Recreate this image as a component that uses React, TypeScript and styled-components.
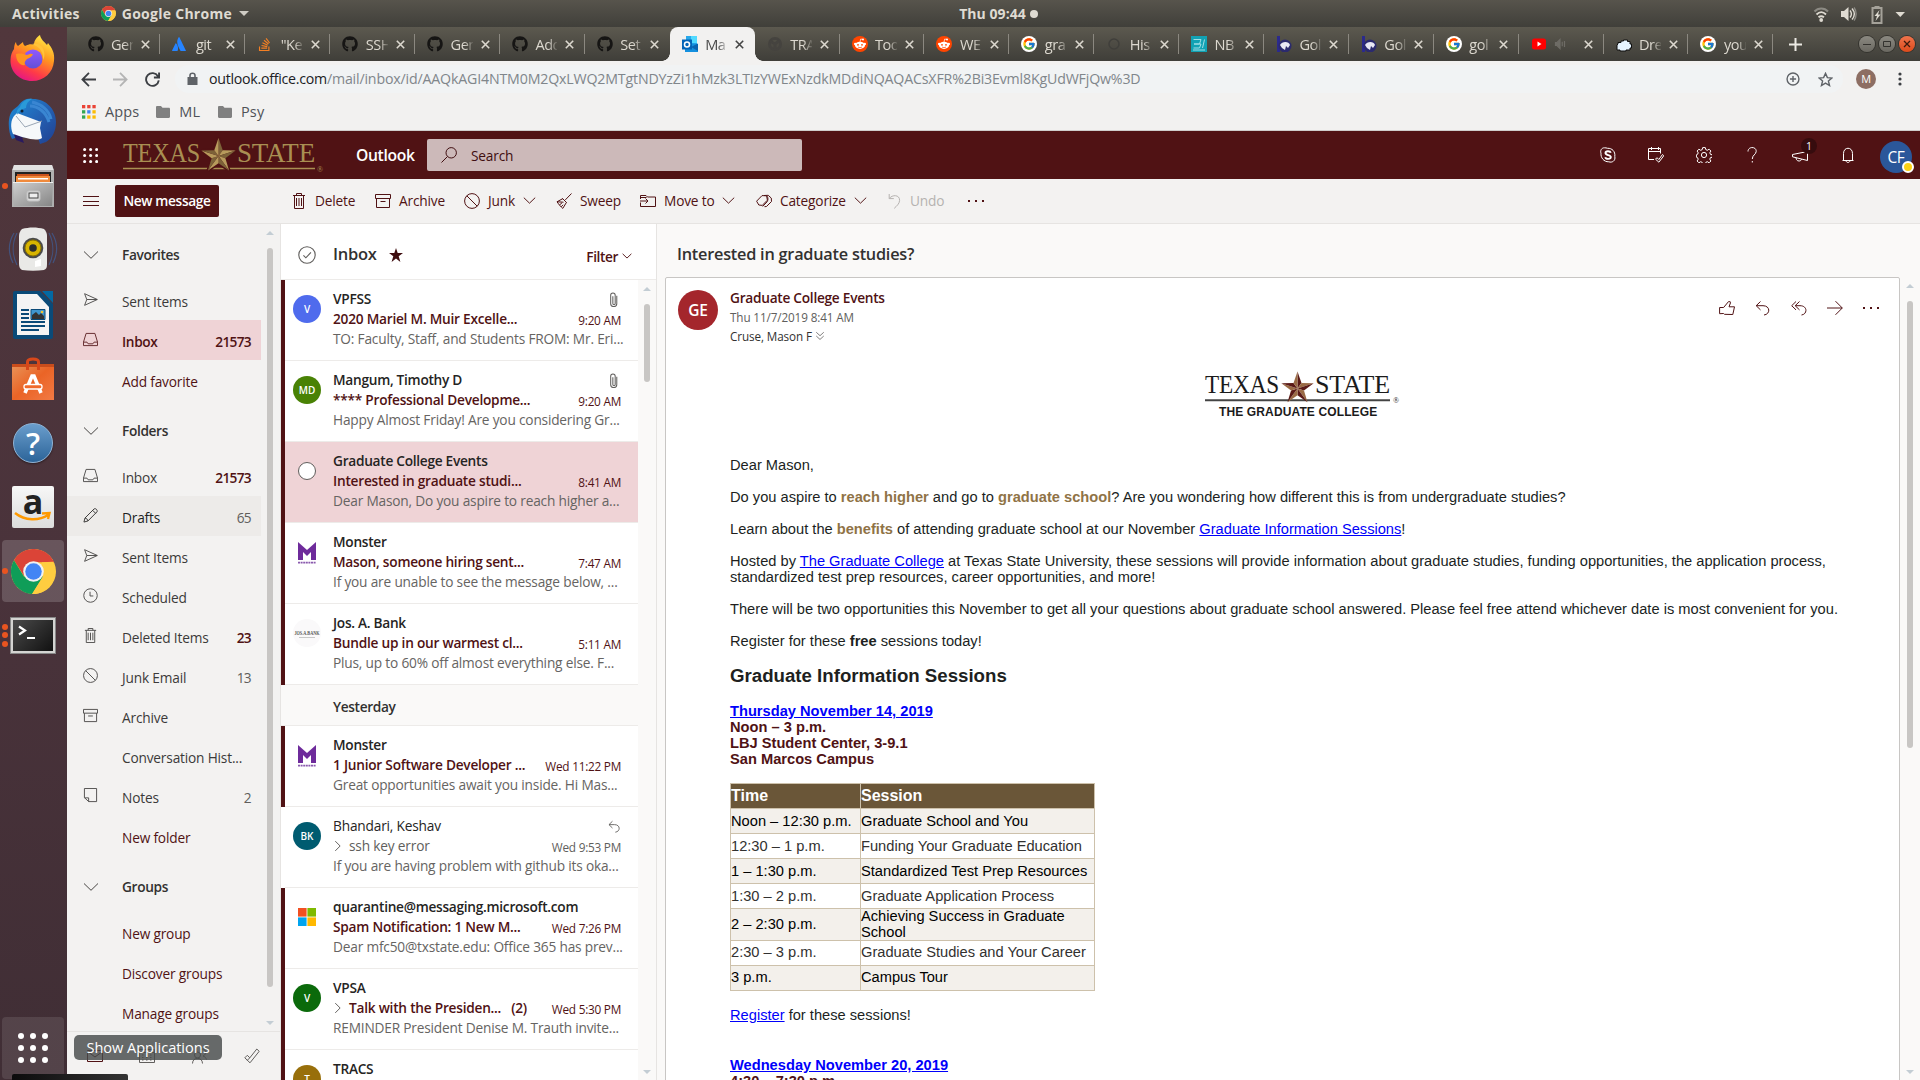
import React from "react";
import styled, { createGlobalStyle, css } from "styled-components";
import { FaGithub, FaStackOverflow, FaAtlassian } from "react-icons/fa";
import { FcGoogle } from "react-icons/fc";

const UI = `"Open Sans", "Noto Sans", sans-serif`;
const MAROON = "#501214";

const Global = createGlobalStyle`
  * { box-sizing: border-box; }
  body { margin: 0; width: 1920px; height: 1080px; overflow: hidden; font-family: ${UI}; font-size: 13.7px; letter-spacing: -0.18px; background: #faf9f8; }
  svg { display: block; flex: none; }
`;

/* ---------- shared ---------- */
const Desktop = styled.div`
  position: relative;
  display: flex;
  flex-direction: column;
  width: 1920px;
  height: 1080px;
  overflow: hidden;
`;
const Work = styled.div`
  flex: 1;
  display: flex;
  min-height: 0;
`;
const Browser = styled.div`
  flex: 1;
  min-width: 0;
  display: flex;
  flex-direction: column;
`;

type IconProps = { size?: number; color?: string; sw?: number; children: React.ReactNode };
const Icon = ({ size = 16, color = "currentColor", sw = 1, children }: IconProps) => (
  <svg width={size} height={size} viewBox="0 0 16 16" fill="none" stroke={color} strokeWidth={sw}>
    {children}
  </svg>
);

const glyphs: Record<string, React.ReactNode> = {
  menu: <path d="M0 3.5h16M0 8.5h16M0 12.5h16" />,
  trash: <path d="M2 2.5h12M5.500 2.500V.5h5v2M3.500 2.500v13h9v-13M5.500 5v8M8 5v8M10.500 5v8" />,
  archive: <path d="M.5 1.5h15v4H.5zM1.5 5.5v9h13v-9M5.5 8.5h5" />,
  block: <><circle cx="8" cy="8" r="7.4" /><path d="M2.8 2.8l10.4 10.4" /></>,
  sweep: <path d="M15.5.5L9.3 6.9M6.6 5.6l4 4M7 5.500L1 8.800c2 2.800 3.800 5 5.800 6.600L10.500 9.300M3.500 12l2.500-2.200M5.200 13.800l1.900-2M1 8.800l6.500.4" />,
  move: <path d="M.5 9.5v4h15V4H7.5L6 2.5H.5V6M.5 4.5h6M0 8h8M5.5 5.5L8 8l-2.5 2.5" />,
  tag: <path d="M6.2 12.4L2.8 12 .6 8.2 6 2.6l4.6.2.8 4.4zM8 2.5l4.2-.2 3.1 2.8.2 3.4-5 5-2 .2M11.3 3.3c1 2 .8 4-.3 5.6L6.7 13.4" />,
  undo: <path d="M3.2 1v4.6h4.6M3.4 5.4C6 1.6 13.8 1.4 13.6 7.4c-.1 3.4-3 5.6-5.4 8" />,
  dots: <g fill="currentColor" stroke="none"><rect x="0" y="7" width="2" height="2" /><rect x="7" y="7" width="2" height="2" /><rect x="14" y="7" width="2" height="2" /></g>,
  chevron: <path d="M1 4.500L8 11.300l7-6.800" />,
  chevronR: <path d="M3 1.500L9.500 8 3 14.500" />,
  send: <path d="M1.7 1.8L15.3 8 1.7 14.2 4 8zM4 8h11" />,
  inbox: <path d="M3.3 1.5h9.4l2.8 9.3v3.7H.5v-3.7zM.5 10.8h3.7l1.3 1.8h5l1.3-1.8h3.7" />,
  pencil: <path d="M1 15l1.1-4.3L11.9.9c1.6-.9 3.9 1.4 3.1 3.1L5.3 13.8zM10.3 2.5l3.2 3.2M2.1 10.7c1.7.3 2.900 1.500 3.200 3.100" />,
  clock: <><circle cx="8" cy="8" r="7.2" /><path d="M7.5 4v4.5H11" /></>,
  note: <path d="M1.5.5h13v14H6L1.5 10.2zM1.5 10.5H6v4" />,
  clip: <path d="M11.500 4v8.500c0 4-6.500 4-6.500 0V3.500c0-3.300 4.800-3.300 4.800 0v8.700c0 1.600-2.500 1.600-2.500 0V4.500" />,
  reply: <path d="M5.5 1.500L1.200 5.700l4.300 4.200M1.200 5.700H8c7.500 0 7.500 8.600 1 9.300" />,
  replyAll: <path d="M5 1.500L.7 5.700 5 9.900M8.500 1.500L4.200 5.700l4.300 4.200M4.200 5.700H9c7.800 0 7.500 8.600 1.500 9.300" />,
  forward: <path d="M0 8h15.200M8.500 1.200L15.300 8l-6.800 6.800" />,
  like: <path d="M.6 7.500h4L9.500 1.600l1.800.2.200 1-1.500 4h5.500l-1.700 7.700-8.400-.2-.8-.8-4 .2z" />,
  search: <><circle cx="10.200" cy="5.800" r="5.200" /><path d="M6.400 9.600L.5 15.500" /></>,
  check: <><circle cx="8" cy="8" r="7.300" /><path d="M4.800 8.300l2.200 2.200 4.500-4.800" /></>,
  mail: <path d="M.5 2.500h15v11H.5zM.5 3.500L8 9l7.500-5.500" />,
  calendar: <path d="M.5 1.500h15v13H.5zM.5 4.500h15M3 7h1.500M7 7h1.500M11 7h1.500M3 9.500h1.500M7 9.500h1.500M11 9.500h1.500M3 12h1.500M7 12h1.500M11 12h1.500" />,
  people: <><circle cx="6.500" cy="7" r="3" /><path d="M1.500 15.500c0-7 10-7 10 0M9.500 1.500c3-1.500 5.500.5 5 3.500-.3 2-1.500 2.500-2.500 3M12 8c2 .5 3 2 3.500 3.500" /></>,
  todo: <path d="M.8 9.800l2.500-2.500 2.500 2.500L12.800 1l2.400 2.300L6 14.800zM5.800 9.800l-2.500 2.500" />,
  down2: <path d="M2 2l6 5.500L14 2M2 8l6 5.500L14 8" />,
};
const Glyph = ({ name, ...rest }: { name: string; size?: number; color?: string; sw?: number }) => (
  <Icon {...rest}>{glyphs[name]}</Icon>
);

/* ---------- GNOME top bar ---------- */
const TopBar = styled.div`
  flex: none;
  height: 27px;
  display: grid;
  grid-template-columns: 1fr auto 1fr;
  align-items: center;
  padding: 0 15px 0 12px;
  background: linear-gradient(#57544c, #403f3a);
  color: #dfdbd2;
  font-size: 14px;
  font-weight: 700;
  letter-spacing: 0.27px;
  white-space: nowrap;
`;
const TopSide = styled.div<{ $end?: boolean }>`
  display: flex;
  align-items: center;
  justify-content: ${(p) => (p.$end ? "flex-end" : "flex-start")};
`;
const TopApp = styled.div`
  display: flex;
  align-items: center;
  gap: 6px;
  margin-left: 21px;
`;
const TopClock = styled.div`
  display: flex;
  align-items: center;
  gap: 4px;
  padding-left: 80px;
  letter-spacing: 0.05px;
`;
const Dot = styled.i`
  width: 8px;
  height: 8px;
  border-radius: 50%;
  background: #dfdbd2;
`;
const Caret = styled.i`
  margin-left: 1px;
  border: 5px solid transparent;
  border-top-color: #cfccc4;
  border-bottom: 0;
`;

const ChromeLogo = ({ size }: { size: number }) => (
  <svg width={size} height={size} viewBox="0 0 48 48">
    <circle cx="24" cy="24" r="24" fill="#ffcd40" />
    <path d="M3.200 12A24 24 0 0 1 44.800 12L46 14H24L14 29z" fill="#db4437" />
    <path d="M3.200 12A24 24 0 0 0 22.500 48L34 29.500 24 24 14 29.500z" fill="#0f9d58" />
    <path d="M44.800 13.500A24 24 0 0 1 22.500 48L34 29.500 33 14z" fill="#ffcd40" />
    <circle cx="24" cy="24" r="11" fill="#f1f1f1" />
    <circle cx="24" cy="24" r="8.800" fill="#4285f4" />
  </svg>
);

const StatusIcons = () => (
  <svg width="92" height="22" viewBox="0 0 92 22" fill="none">
    <path d="M1.500 8.500c3.500-4 10-4 13.500 0" stroke="#8c8a83" strokeWidth="2" />
    <path d="M3.500 11.500c3-3 6.500-3 9.500 0M5.500 14.300c2-1.600 3.500-1.600 5.500 0" stroke="#dfdbd2" strokeWidth="1.800" />
    <circle cx="8.200" cy="17" r="1.900" fill="#dfdbd2" />
    <path d="M28 8h3l4.500-4v14L31 14h-3z" fill="#dfdbd2" />
    <path d="M37 7.500c1.600 2 1.600 5 0 7M39 5.500c3 3.500 3 7.500 0 11" stroke="#dfdbd2" strokeWidth="1.400" />
    <path d="M41 4.500c2.800 3.500 2.800 9.500 0 13" stroke="#8c8a83" strokeWidth="1.400" />
    <path d="M59.500 5h9v15h-9zM61.500 4h5" stroke="#a5a29a" strokeWidth="2" />
    <path d="M66.500 7l-5 6h2.500l-1.500 5 5-6.500H65z" fill="#dfdbd2" />
    <path d="M82.500 9h9.500l-4.700 5z" fill="#dfdbd2" />
  </svg>
);

/* ---------- dock ---------- */
const Dock = styled.nav`
  flex: none;
  width: 67px;
  display: flex;
  flex-direction: column;
  background: linear-gradient(#51373c, #4a333b 50%, #402e35);
`;
const DockSlot = styled.div<{ $active?: boolean; $last?: boolean }>`
  position: relative;
  flex: none;
  height: 62px;
  width: 62px;
  margin: ${(p) => (p.$last ? "auto 2px 1px" : "0 2px 2.150px")};
  display: flex;
  align-items: center;
  justify-content: center;
  border-radius: 4px;
  background: ${(p) => (p.$last ? "rgba(255,255,255,.1)" : p.$active ? "rgba(255,255,255,.17)" : "none")};
`;
const Pips = styled.div`
  position: absolute;
  left: 0;
  top: 0;
  height: 100%;
  display: flex;
  flex-direction: column;
  justify-content: center;
  gap: 2.500px;
`;
const Pip = styled.i`
  width: 6px;
  height: 6px;
  border-radius: 50%;
  background: #e95420;
`;

const Firefox = () => (
  <svg width="48" height="48" viewBox="0 0 48 48">
    <defs>
      <linearGradient id="ff" x1=".8" y1="0" x2=".3" y2="1"><stop offset="0" stopColor="#fff14a" /><stop offset=".4" stopColor="#ff9a1f" /><stop offset=".75" stopColor="#ff3b47" /><stop offset="1" stopColor="#e31587" /></linearGradient>
      <linearGradient id="fp" x1="0" y1="0" x2="0" y2="1"><stop offset="0" stopColor="#9059ff" /><stop offset="1" stopColor="#6350d6" /></linearGradient>
    </defs>
    <path d="M5 15c0-3 1-6 2-7 0 2 1 3 2 4l5-4c0 2 1 3 2 4 4-2 7-2 9-1C25 6 28 3 31 1c1 5 4 6 7 10l1-2c4 5 7 10 6 18-1 12-10 20-22 20S1 38 1.500 26C1.700 21 3 18 5 15z" fill="url(#ff)" />
    <circle cx="24" cy="25" r="9.500" fill="url(#fp)" />
    <path d="M7 20c5-1 8 0 11 1 4-2 5-1 6-1-1 3-4 4-6 5-2 2-3 4-2 6C12 32 7 28 7 20z" fill="#ff9420" />
    <path d="M25 11c6 2 10 8 9 15 3-4 1-12-2-14-3-3-7-3-9-2z" fill="#ffc43a" />
  </svg>
);
const Thunderbird = () => (
  <svg width="50" height="48" viewBox="0 0 50 48">
    <defs><linearGradient id="tb" x1="0" y1="0" x2="1" y2="1"><stop offset="0" stopColor="#1c8fd8" /><stop offset=".5" stopColor="#2463b5" /><stop offset="1" stopColor="#1f3f90" /></linearGradient></defs>
    <path d="M10 8C15 1 20 0 25 1c13 0 23 10 23 23 0 8-3 16-10 20l-6 2-2-6-20-1-6 2C0 34-1 18 5 12z" fill="url(#tb)" />
    <path d="M5 34l3 8 8 3-2-6z" fill="#2a1a5e" />
    <path d="M6 18l3-3 24 9-1 6 2 10c-6 4-20-1-29-4C2 29 3 22 6 18z" fill="#f6f8fa" />
    <path d="M8 18l9 11 17-6" fill="none" stroke="#9aa6b5" />
    <path d="M12 9c2-6 8-9 12-8-4 2-6 5-6 9-4 1-8 4-9 7-1-3 0-6 3-8z" fill="#2a9ad8" />
    <path d="M22 8c8 0 16 6 19 16M24 4c9 2 17 8 19 17" stroke="#3a86d2" strokeWidth="3" fill="none" />
    <circle cx="14" cy="13" r="1.500" fill="#123" />
  </svg>
);
const Files = () => (
  <svg width="42" height="44" viewBox="0 0 42 44">
    <defs><linearGradient id="fl" x1="0" y1="0" x2="1" y2="1"><stop offset="0" stopColor="#d0d0d0" /><stop offset="1" stopColor="#858585" /></linearGradient></defs>
    <path d="M2 1h38l2 5v37H0V6z" fill="#b0b0b0" /><path d="M2 1h38l1.500 5H.5z" fill="#e2e2e2" />
    <rect x="3" y="8" width="36" height="11" fill="#222" />
    <path d="M5 10h32v8H5z" fill="#c8521c" /><path d="M4 12h34v6H4z" fill="#f08a3c" /><path d="M6 14h30v1.500H6z" fill="#fff" />
    <path d="M1 18h40l-1 24H2z" fill="url(#fl)" /><path d="M1 18h40v1H1z" fill="#eee" />
    <rect x="15" y="27" width="13" height="10" rx="2" fill="#dcdcdc" stroke="#c2c2c2" /><rect x="17" y="29" width="9" height="5" fill="#eee" stroke="#444" />
  </svg>
);
const Rhythmbox = () => (
  <svg width="50" height="46" viewBox="0 0 50 46">
    <path d="M6 6C0 16 0 26 5 36M9 6C4 16 4 28 9 38M44 6c6 10 6 20 1 30M41 6c5 10 5 22 0 32" stroke="#3e5f9a" strokeWidth="1.200" fill="none" opacity=".7" />
    <path d="M14 2c7-2 15-2 22 0 2 2 3 4 3 7v28c0 4-1 5-3 6-7 1-15 1-22 0-2-1-3-3-3-6V9c0-3 1-5 3-7z" fill="#e9e9e7" />
    <circle cx="25" cy="21" r="10.300" fill="#4a4a4a" /><circle cx="25" cy="21" r="8" fill="#d8b400" stroke="#8a7200" /><circle cx="25" cy="21" r="3.800" fill="#2c2c2c" />
    <path d="M27 40v-6l6-2v7z" fill="#fff" />
  </svg>
);
const Writer = () => (
  <svg width="40" height="48" viewBox="0 0 40 48">
    <path d="M2 0h25l13 13v33a2 2 0 0 1-2 2H2a2 2 0 0 1-2-2V2a2 2 0 0 1 2-2z" fill="#0a4a78" />
    <path d="M29 0h11v12z" fill="#0369a3" />
    <path d="M4 3h20l12 13v28H4z" fill="#f4f4f4" />
    <path d="M8 19h8M8 23h8M8 27h8M8 31h24M8 35h24M8 39h18" stroke="#0a4a78" strokeWidth="2" />
    <path d="M18 18.500h14v10H18z" fill="#3f96cf" stroke="#0a4a78" /><path d="M19 28v-4l4-3 3 3 2-2 3 3v3z" fill="#333" /><circle cx="29" cy="21" r="1.300" fill="#f4c430" />
  </svg>
);
const Software = () => (
  <svg width="42" height="44" viewBox="0 0 42 44">
    <defs><linearGradient id="sw" x1="0" y1="0" x2="1" y2="1"><stop offset="0" stopColor="#e9955a" /><stop offset=".5" stopColor="#ea6426" /><stop offset="1" stopColor="#f27a45" /></linearGradient></defs>
    <path d="M0 7h42v36H0z" fill="url(#sw)" /><path d="M0 7h42v3H0z" fill="#c94d1c" />
    <path d="M15.500 13V5c0-4 11-4 11 0v8" stroke="#d8481a" strokeWidth="3" fill="none" />
    <path d="M13 36l7-17h2l7 17" stroke="#fff" strokeWidth="3.600" fill="none" />
    <rect x="12" y="27.500" width="18" height="4.500" rx="2" fill="#f06a2c" stroke="#fff" strokeWidth="1.300" />
  </svg>
);
const Round = styled.div`
  width: 40px;
  height: 40px;
  border-radius: 50%;
  border: 1px solid #8fb4d6;
  background: linear-gradient(#6a9dcc, #2c6499);
  color: #fff;
  font: 600 31px/38px ${UI};
  text-align: center;
  letter-spacing: 0;
  box-shadow: 0 1px 2px rgba(0, 0, 0, 0.4);
`;
const AmazonTile = styled.div`
  position: relative;
  width: 42px;
  height: 42px;
  border-radius: 2px;
  background: linear-gradient(#f7f7f7, #dcdcdc);
  color: #222;
  font: 700 34px/30px ${UI};
  text-align: center;
  svg { position: absolute; left: 2px; top: 25px; }
`;
const TermTile = styled.div`
  width: 46px;
  height: 37px;
  border: 3px solid #d4d4d2;
  outline: 1px solid #888;
  outline-offset: -1px;
  background: linear-gradient(135deg, #4a4a4a, #111);
  svg { margin: 5px; }
`;
const AppsGrid = styled.div`
  display: grid;
  grid-template-columns: repeat(3, 6px);
  gap: 6px;
  i { width: 6px; height: 6px; border-radius: 50%; background: #fff; }
`;

/* ---------- tab strip ---------- */
const TabStrip = styled.div`
  flex: none;
  height: 34px;
  display: flex;
  align-items: flex-end;
  padding-left: 8.500px;
  background: linear-gradient(#5c594f, #3f3e39);
`;
const TabBox = styled.div<{ $active?: boolean; $line?: boolean }>`
  position: relative;
  flex: none;
  width: 84.900px;
  height: 34px;
  display: flex;
  align-items: center;
  padding-left: 12px;
  font-size: 14.600px;
  letter-spacing: -0.5px;
  color: #dcd8cf;
  ${(p) =>
    p.$line &&
    css`
      &::after { content: ""; position: absolute; right: 0; top: 7px; width: 1px; height: 20px; background: #8b8880; }
    `}
  ${(p) =>
    p.$active &&
    css`
      color: #4b4b4b;
      background: #f2f1f0;
      border-radius: 8px 8px 0 0;
      &::before, &::after { content: ""; position: absolute; bottom: 0; width: 8px; height: 8px; }
      &::before { left: -8px; background: radial-gradient(circle at 0 0, transparent 7.500px, #f2f1f0 8px); }
      &::after { right: -8px; background: radial-gradient(circle at 100% 0, transparent 7.500px, #f2f1f0 8px); }
    `}
`;
const Favicon = styled.div`
  width: 16px;
  display: flex;
`;
const TabTitle = styled.div`
  width: 22px;
  margin: 0 8px 0 7.500px;
  overflow: hidden;
  white-space: nowrap;
  line-height: 20px;
  mask-image: linear-gradient(90deg, #000 60%, rgba(0, 0, 0, 0.15));
`;
const TabClose = ({ dark }: { dark?: boolean }) => (
  <svg width="9" height="9" viewBox="0 0 9 9" stroke={dark ? "#444" : "#dcd8cf"} strokeWidth="1.600"><path d="M.8.800l7.400 7.400M8.200.800L.8 8.200" /></svg>
);
const NewTab = styled.div`
  align-self: center;
  margin-left: 16px;
`;
const WinBtns = styled.div`
  display: flex;
  gap: 4px;
  align-self: center;
  margin-left: auto;
  padding-right: 5px;
`;
const WinBtn = styled.div<{ $close?: boolean }>`
  width: 16px;
  height: 16px;
  border-radius: 50%;
  background: ${(p) => (p.$close ? "linear-gradient(#f0744c, #dd4a1b)" : "linear-gradient(#8b8981, #6a6861)")};
  box-shadow: 0 0 0 1px #35342f;
  display: flex;
  align-items: center;
  justify-content: center;
`;

const Globe = ({ c }: { c: string }) => <Icon color={c} sw={3}><circle cx="8" cy="8" r="5.500" /><path d="M3 5l5 3 4-3M8 8v5" /></Icon>;
const favicons: Record<string, React.ReactNode> = {
  gh: <FaGithub size={16} color="#161514" />,
  at: <FaAtlassian size={14} color="#2684ff" />,
  so: <FaStackOverflow size={15} color="#f48024" />,
  ol: (
    <svg width="16" height="16" viewBox="0 0 16 16"><path d="M4 0h11v8H4z" fill="#28a8ea" /><path d="M9 0h6v7H9z" fill="#50d9ff" /><path d="M3 7l13 1v8H3z" fill="#1490df" /><path d="M16 7.500V15l-7-4z" fill="#0a63b0" /><path d="M0 3.500h10v10H0z" fill="#0364b8" /><circle cx="5" cy="8.500" r="2.500" fill="none" stroke="#fff" strokeWidth="1.500" /></svg>
  ),
  g1: <Globe c="#45433f" />,
  g2: <Icon color="#403f3b" sw={1.500}><circle cx="8" cy="8" r="5" /></Icon>,
  rd: (
    <svg width="16" height="16" viewBox="0 0 16 16"><circle cx="8" cy="8" r="8" fill="#ff4500" /><ellipse cx="8" cy="9.300" rx="5" ry="3.600" fill="#fff" /><circle cx="3.200" cy="8" r="1.200" fill="#fff" /><circle cx="12.800" cy="8" r="1.200" fill="#fff" /><circle cx="11" cy="3.500" r="1" fill="#fff" /><path d="M8 6l.7-3 2.300.5" stroke="#fff" strokeWidth=".7" fill="none" /><circle cx="6" cy="8.800" r=".9" fill="#ff4500" /><circle cx="10" cy="8.800" r=".9" fill="#ff4500" /><path d="M6 11c1.200.8 2.800.8 4 0" stroke="#ff4500" strokeWidth=".7" fill="none" /></svg>
  ),
  go: (
    <svg width="16" height="16" viewBox="0 0 16 16"><circle cx="8" cy="8" r="8" fill="#fff" /><g transform="translate(1.200 1.200)"><FcGoogle size={13.600} /></g></svg>
  ),
  nb: (
    <svg width="16" height="16" viewBox="0 0 16 16"><path d="M0 0h16v16H0z" fill="#12a2b4" /><path d="M2.500 3.500H10l-1.500 4.500H3M2.500 12h6L10 8H3M11.500 12l2-8.500M2 14h12" stroke="#9fdfe6" fill="none" /></svg>
  ),
  bb: (
    <svg width="16" height="16" viewBox="0 0 16 16"><path d="M1 0h3v16H1z" fill="#2b2a8c" /><circle cx="9" cy="10" r="6.500" fill="#2b2a6e" /><path d="M4 9c2-4 9-4 10 0l-2 3-2-2-1 4-3-2z" fill="#e8e8f4" /></svg>
  ),
  yt: (
    <svg width="16" height="16" viewBox="0 0 16 16"><rect x="1" y="2.500" width="14" height="11" rx="2.500" fill="#f00" /><path d="M6.500 5.500l4 2.500-4 2.500z" fill="#fff" /></svg>
  ),
  cl: (
    <svg width="16" height="16" viewBox="0 0 16 16"><path d="M2 8V6.500h3V5h2.500V4h4v1.500H14V8h1.500v4H14v2h-4v1H4v-1H1V9z" fill="#e6f4ff" stroke="#111" /></svg>
  ),
};
const tabs: [string, string][] = [
  ["gh", "Gen"], ["at", "git"], ["so", '"Ke'], ["gh", "SSH"], ["gh", "Gen"], ["gh", "Add"], ["gh", "Set"], ["ol", "Ma"], ["g1", "TRA"], ["rd", "Too"],
  ["rd", "WE"], ["go", "gra"], ["g2", "His"], ["nb", "NB"], ["bb", "Gol"], ["bb", "Gol"], ["go", "gol"], ["yt", ""], ["cl", "Dre"], ["go", "you"],
];
const MutedSpeaker = () => <Icon size={12} color="#6e6c66" sw={1.600}><path d="M2 6v4h2l4 4V2L4 6z" fill="#6e6c66" /><path d="M11 5v6M14 4v8" /></Icon>;

/* ---------- browser toolbar ---------- */
const NavBar = styled.div`
  flex: none;
  height: 36px;
  display: flex;
  align-items: center;
  background: #f2f1f0;
  padding: 0 15px 0 14px;
`;
const NavButtons = styled.div`
  display: flex;
  gap: 17px;
`;
const Omnibox = styled.div`
  flex: none;
  width: 1668px;
  height: 28px;
  margin-left: 15px;
  border-radius: 14px;
  background: #f1f3f4;
  display: flex;
  align-items: center;
  padding: 0 10px 0 11px;
`;
const UrlText = styled.div`
  flex: 1;
  margin-left: 10px;
  font-size: 14.200px;
  letter-spacing: -0.170px;
  line-height: 20px;
  color: #80868b;
  b { font-weight: 400; color: #202124; letter-spacing: -0.270px; }
`;
const OmniActions = styled.div`
  display: flex;
  align-items: center;
  gap: 18px;
`;
const Profile = styled.div`
  width: 20px;
  height: 20px;
  margin: 0 22px 0 13px;
  border-radius: 50%;
  background: #8d6e63;
  color: #fff;
  font-size: 11px;
  line-height: 20px;
  text-align: center;
`;
const Bookmarks = styled.div`
  flex: none;
  height: 34px;
  display: flex;
  align-items: center;
  padding: 0 0 4px 15px;
  background: #f2f1f0;
  border-bottom: 1px solid #cfcdcb;
  color: #4f5257;
  font-size: 14.500px;
  letter-spacing: 0.1px;
`;
const Bookmark = styled.div<{ $gap: number }>`
  display: flex;
  align-items: center;
  gap: 9px;
  margin-right: ${(p) => p.$gap}px;
`;
const Folder = () => <svg width="14" height="12" viewBox="0 0 14 12"><path d="M0 1.200C0 .5.5 0 1.200 0H5l1.500 1.700h6.300c.7 0 1.200.5 1.200 1.200v7.900c0 .7-.5 1.200-1.200 1.200H1.200C.5 12 0 11.500 0 10.800z" fill="#808080" /></svg>;
const AppsDots = () => (
  <svg width="14" height="14" viewBox="0 0 14 14">
    {["#ea4335", "#ea4335", "#ea4335", "#34a853", "#4285f4", "#fbbc05", "#34a853", "#fbbc05", "#fbbc05"].map((c, i) => (
      <rect key={i} x={(i % 3) * 5.2} y={Math.floor(i / 3) * 5.2} width="3.300" height="3.300" fill={c} />
    ))}
  </svg>
);

/* ---------- Outlook suite header ---------- */
const Suite = styled.header`
  flex: none;
  height: 48px;
  display: flex;
  align-items: center;
  background: ${MAROON};
  padding-left: 16px;
  color: #fff;
`;
const Brand = styled.div`
  margin-left: 24px;
`;
const Product = styled.div`
  width: 71px;
  margin-left: 32px;
  font-size: 15.700px;
  font-weight: 600;
  letter-spacing: -0.350px;
`;
const SearchBox = styled.div`
  flex: none;
  width: 375px;
  height: 32px;
  display: flex;
  align-items: center;
  gap: 14px;
  padding-left: 14px;
  border-radius: 2px;
  background: #ccb9b9;
  color: #3f0e10;
`;
const SuiteIcons = styled.div`
  margin-left: auto;
  display: flex;
  align-items: center;
  padding-right: 8px;
`;
const SuiteCell = styled.div`
  position: relative;
  width: 48px;
  display: flex;
  justify-content: center;
`;
const Badge = styled.span`
  position: absolute;
  left: 25px;
  top: -9px;
  width: 16px;
  height: 16px;
  border-radius: 50%;
  background: #360c0e;
  font-size: 10.500px;
  line-height: 16px;
  text-align: center;
`;
const Me = styled.div`
  position: relative;
  width: 32px;
  height: 32px;
  margin: 4px 0 0 8px;
  border-radius: 50%;
  background: #2b579a;
  font-size: 15.500px;
  line-height: 33px;
  text-align: center;
  letter-spacing: -0.5px;
`;
const Away = styled.i`
  position: absolute;
  right: -2px;
  bottom: 0;
  width: 12px;
  height: 12px;
  border-radius: 50%;
  border: 2px solid #fff;
  background: #fcd116;
`;

const starPts = (cx: number, cy: number, R: number, r: number) =>
  Array.from({ length: 10 }, (_, i) => {
    const a = -Math.PI / 2 + (i * Math.PI) / 5;
    const d = i % 2 ? r : R;
    return [cx + d * Math.cos(a), cy + d * Math.sin(a)] as const;
  });
const Star = ({ cx, cy, R, light, dark }: { cx: number; cy: number; R: number; light: string; dark: string }) => {
  const p = starPts(cx, cy, R, R * 0.4);
  return (
    <g>
      {p.map((a, i) => {
        const b = p[(i + 1) % 10];
        return <path key={i} d={`M${cx} ${cy}L${a[0]} ${a[1]}L${b[0]} ${b[1]}z`} fill={i % 2 ? light : dark} />;
      })}
    </g>
  );
};
const HeaderLogo = () => (
  <svg width="202" height="42" viewBox="0 0 202 42" fontFamily='"Liberation Serif", serif' fill="#a98f52">
    <text x="1" y="27.500" fontSize="27" textLength="77" lengthAdjust="spacingAndGlyphs">TEXAS</text>
    <text x="115" y="27.500" fontSize="27" textLength="78" lengthAdjust="spacingAndGlyphs">STATE</text>
    <path d="M1 34.500h192" stroke="#a98f52" strokeWidth="1.400" />
    <g stroke={MAROON} strokeWidth="3"><Star cx={96.5} cy={22} R={18} light={MAROON} dark={MAROON} /></g>
    <Star cx={96.5} cy={22} R={18} light="#b79b5c" dark="#7c6238" />
    <text x="195" y="38" fontSize="8">®</text>
  </svg>
);
const CollegeLogo = () => (
  <svg width="199" height="50" viewBox="0 0 199 50" fontFamily='"Liberation Serif", serif' fill="#1b1b1b">
    <text x="1" y="24" fontSize="25" textLength="74" lengthAdjust="spacingAndGlyphs">TEXAS</text>
    <text x="111" y="24" fontSize="25" textLength="75" lengthAdjust="spacingAndGlyphs">STATE</text>
    <path d="M1 31.200h185" stroke="#444" strokeWidth="2" />
    <Star cx={93.5} cy={19.5} R={17} light="#9a6b45" dark="#5a1a17" />
    <text x="189" y="34" fontSize="8">®</text>
    <text x="15" y="47" fontSize="12" fontWeight="700" fontFamily='"Liberation Sans", sans-serif' textLength="158">THE GRADUATE COLLEGE</text>
  </svg>
);

/* ---------- command bar ---------- */
const Commands = styled.div`
  flex: none;
  height: 45px;
  display: flex;
  align-items: center;
  padding: 0 0 1px 16px;
  background: #f3f2f1;
  border-bottom: 1px solid #e6e4e2;
  color: ${MAROON};
`;
const NewMessage = styled.button`
  width: 104px;
  height: 32px;
  margin: 0 72px 0 16px;
  padding: 0;
  border: 0;
  border-radius: 2px;
  background: ${MAROON};
  color: #fff;
  font: 600 13.700px ${UI};
  letter-spacing: -0.350px;
`;
const Command = styled.div<{ $w: number; $off?: boolean }>`
  width: ${(p) => p.$w}px;
  display: flex;
  align-items: center;
  gap: 8px;
  color: ${(p) => (p.$off ? "#b5b2b0" : MAROON)};
  white-space: nowrap;
`;

/* ---------- panes ---------- */
const Panes = styled.div`
  flex: 1;
  min-height: 0;
  display: flex;
`;
const Sidebar = styled.aside`
  flex: none;
  width: 214px;
  display: flex;
  flex-direction: column;
  background: #f3f2f1;
  border-right: 1px solid #e6e4e2;
`;
const Scroller = styled.div`
  flex: 1;
  min-height: 0;
  display: flex;
  overflow: hidden;
`;
const NavList = styled.div`
  width: 194px;
`;
const NavHead = styled.div`
  height: 56px;
  padding: 5px 0 0 16px;
  display: flex;
  align-items: center;
  gap: 23px;
  font-weight: 600;
  letter-spacing: -0.350px;
  color: #323130;
  svg { color: #484644; }
`;
const NavRow = styled.div<{ $tone?: "on" | "hover"; $link?: boolean }>`
  height: 40px;
  padding: 2px 10px 0 16px;
  display: flex;
  align-items: center;
  color: ${(p) => (p.$link ? MAROON : p.$tone === "hover" ? "#201f1e" : "#3b3a39")};
  background: ${(p) => (p.$tone === "on" ? "#efd3d6" : p.$tone === "hover" ? "#edebe9" : "none")};
  ${(p) => p.$tone === "on" && css`color: ${MAROON}; font-weight: 600; letter-spacing: -0.350px;`}
  ${(p) => p.$tone === "hover" && css`font-weight: 500;`}
`;
const NavIcon = styled.span`
  width: 39px;
  padding-bottom: 3px;
  color: inherit;
  opacity: 0.9;
`;
const Count = styled.span<{ $bold?: boolean }>`
  margin-left: auto;
  color: ${(p) => (p.$bold ? MAROON : "#605e5c")};
  font-weight: ${(p) => (p.$bold ? 600 : 400)};
  letter-spacing: -0.7px;
`;
const Modules = styled.div`
  flex: none;
  height: 49px;
  display: flex;
  align-items: center;
  gap: 36.200px;
  padding: 0 0 0 20px;
  border-top: 1px solid #e6e4e2;
  color: #605e5c;
`;
const Bar = styled.div<{ $w: number; $top: number }>`
  flex: none;
  width: ${(p) => p.$w}px;
  display: flex;
  flex-direction: column;
  align-items: center;
  padding: ${(p) => p.$top}px 0 6px;
`;
const Arrow = styled.i<{ $down?: boolean }>`
  border: 4px solid transparent;
  ${(p) => (p.$down ? "border-top-color: #c3cdd4; border-bottom: 0; margin-top: auto;" : "border-bottom-color: #c3cdd4; border-top: 0;")}
`;
const Thumb = styled.i<{ $h: number; $gap: number }>`
  width: 6px;
  height: ${(p) => p.$h}px;
  margin-top: ${(p) => p.$gap}px;
  border-radius: 3px;
  background: #c8c6c4;
`;

/* ---------- message list ---------- */
const ListPane = styled.section`
  flex: none;
  width: 376px;
  display: flex;
  flex-direction: column;
  background: #faf9f8;
  border-right: 1px solid #e6e4e2;
`;
const ListHead = styled.div`
  flex: none;
  height: 56px;
  display: flex;
  align-items: center;
  padding: 6px 24px 0 17px;
  background: #fff;
  border-bottom: 1px solid #edebe9;
`;
const ListTitle = styled.h2`
  margin: -2px 12px 0 17px;
  font-size: 16.500px;
  font-weight: 600;
  color: #323130;
  letter-spacing: -0.250px;
`;
const Filter = styled.div`
  margin-left: auto;
  display: flex;
  align-items: center;
  gap: 4px;
  padding-top: 3px;
  color: ${MAROON};
  font-weight: 600;
  letter-spacing: -0.4px;
`;
const Rows = styled.div`
  width: 357px;
`;
const Row = styled.article<{ $unread?: boolean; $on?: boolean }>`
  height: 81px;
  display: flex;
  padding: 9px 17px 0 8px;
  border-left: 4px solid ${(p) => (p.$unread ? MAROON : "#fff")};
  background: ${(p) => (p.$on ? "#efd3d6" : "#fff")};
  background-clip: padding-box;
  box-shadow: inset 0 -1px #edebe9;
`;
const Group = styled.div`
  height: 41px;
  padding-left: 52px;
  line-height: 43px;
  font-weight: 600;
  letter-spacing: -0.350px;
  color: #323130;
  border-bottom: 1px solid #edebe9;
`;
const Avatar = styled.div<{ $bg?: string }>`
  flex: none;
  width: 28px;
  height: 28px;
  margin: 6px 12px 0 0;
  border-radius: 50%;
  background: ${(p) => p.$bg || "none"};
  color: #fff;
  font-size: 10px;
  font-weight: 600;
  letter-spacing: 0;
  display: flex;
  align-items: center;
  justify-content: center;
`;
const Check = styled.i`
  width: 18px;
  height: 18px;
  border: 1px solid #605e5c;
  border-radius: 50%;
  background: #fff;
`;
const RowBody = styled.div`
  flex: 1;
  min-width: 0;
  padding-top: 0.4px;
  line-height: 20px;
`;
const Line = styled.div`
  display: flex;
  align-items: center;
  white-space: nowrap;
  height: 20px;
`;
const Sender = styled.span<{ $unread?: boolean }>`
  flex: 1;
  color: #252423;
  font-weight: ${(p) => (p.$unread ? 600 : 400)};
  letter-spacing: ${(p) => (p.$unread ? "-0.28px" : "-0.18px")};
`;
const Subject = styled.span<{ $unread?: boolean; $thread?: boolean }>`
  color: ${(p) => (p.$unread ? MAROON : "#605e5c")};
  font-weight: ${(p) => (p.$unread ? 600 : 400)};
  letter-spacing: ${(p) => (p.$unread ? "-0.24px" : "-0.18px")};
  margin-left: ${(p) => (p.$thread ? "4px" : 0)};
  & + & { margin-left: 10px; }
`;
const Time = styled.span<{ $unread?: boolean }>`
  margin-left: auto;
  padding-top: 1px;
  font-size: 11.800px;
  letter-spacing: -0.250px;
  color: ${(p) => (p.$unread ? MAROON : "#605e5c")};
`;
const Preview = styled.div`
  color: #666462;
  white-space: nowrap;
  letter-spacing: -0.190px;
`;

const MonsterMark = () => (
  <svg width="20" height="28" viewBox="0 0 20 28"><path d="M1 4l9 8 9-8v18h-5v-8l-4 4-4-4v8H1z" fill="#6e2b9b" /><path d="M1 24.700h18" stroke="#8a5aae" strokeWidth="1.800" strokeDasharray="2 .6" /></svg>
);
const BankMark = () => (
  <svg width="26" height="12" viewBox="0 0 26 12" fontFamily='"Liberation Serif", serif' fill="#555"><text x="0.500" y="8" fontSize="7" textLength="25" lengthAdjust="spacingAndGlyphs">JOS.A.BANK</text><path d="M5 10.500h16" stroke="#bbb" strokeWidth=".8" /></svg>
);
const MsMark = () => (
  <svg width="18" height="18" viewBox="0 0 18 18"><path d="M0 0h8.600v8.600H0z" fill="#f25022" /><path d="M9.400 0H18v8.600H9.400z" fill="#7fba00" /><path d="M0 9.400h8.600V18H0z" fill="#00a4ef" /><path d="M9.400 9.400H18V18H9.400z" fill="#ffb900" /></svg>
);

type Msg = { from: string; subj: string; time: string; prev: string; av: string; bg?: string; read?: boolean; on?: boolean; mark?: string; thread?: boolean; n?: string };
const today: Msg[] = [
  { from: "VPFSS", subj: "2020 Mariel M. Muir Excelle...", time: "9:20 AM", prev: "TO: Faculty, Staff, and Students FROM: Mr. Eri...", av: "V", bg: "#4f6bed", mark: "clip" },
  { from: "Mangum, Timothy D", subj: "**** Professional Developme...", time: "9:20 AM", prev: "Happy Almost Friday! Are you considering Gr...", av: "MD", bg: "#498205", mark: "clip" },
  { from: "Graduate College Events", subj: "Interested in graduate studi...", time: "8:41 AM", prev: "Dear Mason, Do you aspire to reach higher a...", av: "check", on: true },
  { from: "Monster", subj: "Mason, someone hiring sent...", time: "7:47 AM", prev: "If you are unable to see the message below, ...", av: "monster" },
  { from: "Jos. A. Bank", subj: "Bundle up in our warmest cl...", time: "5:11 AM", prev: "Plus, up to 60% off almost everything else. F...", av: "bank", bg: "#faf9fa" },
];
const yesterday: Msg[] = [
  { from: "Monster", subj: "1 Junior Software Developer ...", time: "Wed 11:22 PM", prev: "Great opportunities await you inside. Hi Mas...", av: "monster" },
  { from: "Bhandari, Keshav", subj: "ssh key error", time: "Wed 9:53 PM", prev: "If you are having problem with github its oka...", av: "BK", bg: "#005b70", read: true, mark: "reply", thread: true },
  { from: "quarantine@messaging.microsoft.com", subj: "Spam Notification: 1 New M...", time: "Wed 7:26 PM", prev: "Dear mfc50@txstate.edu: Office 365 has prev...", av: "ms" },
  { from: "VPSA", subj: "Talk with the Presiden...", n: "(2)", time: "Wed 5:30 PM", prev: "REMINDER President Denise M. Trauth invite...", av: "V", bg: "#0b6a0b", thread: true },
  { from: "TRACS", subj: "", time: "", prev: "", av: "T", bg: "#986f0b" },
];
const avatarArt: Record<string, React.ReactNode> = { check: <Check />, monster: <MonsterMark />, bank: <BankMark />, ms: <MsMark /> };
const MessageRow = ({ m }: { m: Msg }) => (
  <Row $unread={!m.read} $on={m.on}>
    <Avatar $bg={m.bg}>{avatarArt[m.av] || m.av}</Avatar>
    <RowBody>
      <Line>
        <Sender $unread={!m.read}>{m.from}</Sender>
        {m.mark && <Glyph name={m.mark} size={m.mark === "clip" ? 15 : 13} color="#605e5c" sw={1.1} />}
      </Line>
      <Line>
        {m.thread && <Glyph name="chevronR" size={12} color="#605e5c" sw={1.3} />}
        <Subject $unread={!m.read} $thread={m.thread}>{m.subj}</Subject>
        {m.n && <Subject $unread>{m.n}</Subject>}
        <Time $unread={!m.read}>{m.time}</Time>
      </Line>
      <Preview>{m.prev}</Preview>
    </RowBody>
  </Row>
);

/* ---------- reading pane ---------- */
const Reading = styled.main`
  flex: 1;
  min-width: 0;
  display: flex;
  flex-direction: column;
  background: #faf9f8;
`;
const Title = styled.h1`
  flex: none;
  height: 53px;
  margin: 0;
  padding: 6px 0 0 20px;
  font-size: 16.300px;
  line-height: 48px;
  font-weight: 600;
  letter-spacing: -0.230px;
  color: #323130;
`;
const ReadScroll = styled.div`
  flex: 1;
  min-height: 0;
  display: flex;
  padding-left: 8px;
`;
const Card = styled.div`
  flex: 1;
  height: 860px;
  padding: 12px;
  border: 1px solid #c8c6c4;
  border-radius: 2px;
  background: #fff;
`;
const CardHead = styled.div`
  display: flex;
  height: 58px;
`;
const BigAvatar = styled.div`
  width: 40px;
  height: 40px;
  border-radius: 50%;
  background: #a4262c;
  color: #fff;
  font-size: 15.500px;
  font-weight: 600;
  line-height: 41px;
  text-align: center;
`;
const Meta = styled.div`
  margin-left: 12px;
  flex: 1;
  font-size: 11.700px;
  line-height: 20px;
  color: #605e5c;
  letter-spacing: -0.110px;
`;
const From = styled.div`
  margin: -2px 0 -1px;
  font-size: 13.700px;
  font-weight: 600;
  color: ${MAROON};
  letter-spacing: -0.270px;
`;
const To = styled.div`
  display: flex;
  align-items: center;
  gap: 3px;
  margin-top: -1px;
  color: #323130;
`;
const Actions = styled.div`
  display: flex;
  gap: 20px;
  height: 36px;
  align-items: center;
  padding-right: 8px;
  color: ${MAROON};
`;
const LogoRow = styled.div`
  margin: 21px 0 38px 526px;
`;
const Letter = styled.div`
  margin-left: 52px;
  width: 1112px;
  font: 14.667px/16px "Liberation Sans", Arial, sans-serif;
  letter-spacing: 0;
  color: #201f1e;
  p { margin: 0 0 16px; }
  a { color: #0000fa; text-decoration: underline; }
`;
const Gold = styled.b`
  color: #8f7346;
`;
const H = styled.h3`
  margin: 0 0 16px;
  font-size: 18.667px;
  line-height: 22px;
`;
const Venue = styled.p<{ $gap?: number }>`
  padding-top: ${(p) => p.$gap || 0}px;
  font-weight: 700;
  color: ${MAROON};
`;
const Schedule = styled.div`
  display: grid;
  grid-template-columns: 129px 233px;
  width: 365px;
  gap: 1px;
  padding: 1px;
  margin-bottom: 16px;
  background: #cdc1ab;
`;
const Cell = styled.div<{ $kind: "head" | "odd" | "even"; $tall?: boolean; $up?: boolean }>`
  height: ${(p) => (p.$tall ? 31 : 24)}px;
  padding-bottom: ${(p) => (p.$up ? 2 : 0)}px;
  display: flex;
  align-items: center;
  background: ${(p) => ({ head: "#6a5638", odd: "#f3f0eb", even: "#fff" })[p.$kind]};
  color: ${(p) => ({ head: "#fff", odd: "#000", even: "#323130" })[p.$kind]};
  ${(p) => p.$kind === "head" && "font-size: 16px; font-weight: 700;"}
`;
const schedule: [string, string][] = [
  ["Noon – 12:30 p.m.", "Graduate School and You"],
  ["12:30 – 1 p.m.", "Funding Your Graduate Education"],
  ["1 – 1:30 p.m.", "Standardized Test Prep Resources"],
  ["1:30 – 2 p.m.", "Graduate Application Process"],
  ["2 – 2:30 p.m.", "Achieving Success in Graduate School"],
  ["2:30 – 3 p.m.", "Graduate Studies and Your Career"],
  ["3 p.m.", "Campus Tour"],
];

/* ---------- overlays ---------- */
const Tooltip = styled.div`
  position: absolute;
  left: 74px;
  top: 1035px;
  width: 148px;
  height: 25px;
  border-radius: 5px;
  background: rgba(71, 74, 75, 0.82);
  color: #fff;
  font-size: 14.600px;
  line-height: 25px;
  text-align: center;
  letter-spacing: -0.050px;
`;
const EdgeStrip = styled.div`
  position: absolute;
  left: 12px;
  bottom: 0;
  width: 116px;
  height: 6px;
  border-radius: 2px 2px 0 0;
  background: linear-gradient(90deg, #0c0b0c, #333);
`;

type NavItem = { label: string; icon?: string; count?: string; bold?: boolean; tone?: "on" | "hover"; link?: boolean };
const navGroups: { head: string; items: NavItem[] }[] = [
  { head: "Favorites", items: [{ label: "Sent Items", icon: "send" }, { label: "Inbox", icon: "inbox", count: "21573", bold: true, tone: "on" }, { label: "Add favorite", link: true }] },
  {
    head: "Folders",
    items: [
      { label: "Inbox", icon: "inbox", count: "21573", bold: true }, { label: "Drafts", icon: "pencil", count: "65", tone: "hover" }, { label: "Sent Items", icon: "send" },
      { label: "Scheduled", icon: "clock" }, { label: "Deleted Items", icon: "trash", count: "23", bold: true }, { label: "Junk Email", icon: "block", count: "13" },
      { label: "Archive", icon: "archive" }, { label: "Conversation Hist..." }, { label: "Notes", icon: "note", count: "2" }, { label: "New folder", link: true },
    ],
  },
  { head: "Groups", items: [{ label: "New group", link: true }, { label: "Discover groups", link: true }, { label: "Manage groups", link: true }] },
];
const commands: { label?: string; icon: string; w: number; more?: boolean; off?: boolean }[] = [
  { label: "Delete", icon: "trash", w: 84 }, { label: "Archive", icon: "archive", w: 89 }, { label: "Junk", icon: "block", w: 92, more: true }, { label: "Sweep", icon: "sweep", w: 84 },
  { label: "Move to", icon: "move", w: 116, more: true }, { label: "Categorize", icon: "tag", w: 130, more: true }, { label: "Undo", icon: "undo", w: 82, off: true }, { icon: "dots", w: 20 },
];

export default function App() {
  return (
    <Desktop>
      <Global />
      <TopBar>
        <TopSide>
          Activities
          <TopApp><ChromeLogo size={15} />Google Chrome<Caret /></TopApp>
        </TopSide>
        <TopClock>Thu 09:44 <Dot /></TopClock>
        <TopSide $end><StatusIcons /></TopSide>
      </TopBar>
      <Work>
        <Dock>
          <DockSlot><Firefox /></DockSlot>
          <DockSlot><Thunderbird /></DockSlot>
          <DockSlot><Pips><Pip /></Pips><Files /></DockSlot>
          <DockSlot><Rhythmbox /></DockSlot>
          <DockSlot><Writer /></DockSlot>
          <DockSlot><Software /></DockSlot>
          <DockSlot><Round>?</Round></DockSlot>
          <DockSlot>
            <AmazonTile>a<svg width="38" height="12" viewBox="0 0 38 12" fill="none" stroke="#f90" strokeWidth="2.400"><path d="M1 2c10 8 24 8 33 2M28 2.500l7.500-.5-1.500 6" /></svg></AmazonTile>
          </DockSlot>
          <DockSlot $active><Pips><Pip /></Pips><ChromeLogo size={45} /></DockSlot>
          <DockSlot>
            <Pips><Pip /><Pip /><Pip /></Pips>
            <TermTile><svg width="20" height="16" viewBox="0 0 20 16" fill="none" stroke="#fff" strokeWidth="2.200"><path d="M1 1.500l6 4-6 4M9 13h8" /></svg></TermTile>
          </DockSlot>
          <DockSlot $last><AppsGrid>{Array.from({ length: 9 }, (_, i) => <i key={i} />)}</AppsGrid></DockSlot>
        </Dock>
        <Browser>
          <TabStrip>
            {tabs.map(([f, t], i) => (
              <TabBox key={i} $active={i === 7} $line={i !== 6 && i !== 7}>
                <Favicon>{favicons[f]}</Favicon>
                <TabTitle>{f === "yt" ? <MutedSpeaker /> : t}</TabTitle>
                <TabClose dark={i === 7} />
              </TabBox>
            ))}
            <NewTab><svg width="13" height="13" viewBox="0 0 13 13" stroke="#eceae4" strokeWidth="2"><path d="M6.500 0v13M0 6.500h13" /></svg></NewTab>
            <WinBtns>
              <WinBtn><svg width="8" height="8" stroke="#33322e"><path d="M0 4.500h8" /></svg></WinBtn>
              <WinBtn><svg width="8" height="8" stroke="#33322e" fill="none"><path d="M.5 1.500h7v5h-7z" /></svg></WinBtn>
              <WinBtn $close><svg width="8" height="8" stroke="#3d1a0d" strokeWidth="1.300"><path d="M1 1l6 6M7 1L1 7" /></svg></WinBtn>
            </WinBtns>
          </TabStrip>
          <NavBar>
            <NavButtons>
              <Icon size={15} color="#3c3f43" sw={1.9}><path d="M16 8H1.500M8.500 1L1.500 8l7 7" /></Icon>
              <Icon size={15} color="#b4b4b4" sw={1.9}><path d="M0 8h14.500M7.500 1l7 7-7 7" /></Icon>
              <Icon size={15} color="#3c3f43" sw={2}><path d="M13.800 4.500A6.800 6.800 0 1 0 14.700 9M15 .5v5.300H9.500" /></Icon>
            </NavButtons>
            <Omnibox>
              <svg width="13" height="14" viewBox="0 0 13 14"><path d="M1.500 5h10v8h-10z" fill="#5f6368" /><path d="M4 5.500V3.500c0-3 5-3 5 0v2" fill="none" stroke="#5f6368" strokeWidth="1.600" /></svg>
              <UrlText><b>outlook.office.com</b>/mail/inbox/id/AAQkAGI4NTM0M2QxLWQ2MTgtNDYzZi1hMzk3LTIzYWExNzdkMDdiNQAQACsXFR%2Bi3Evml8KgUdWFjQw%3D</UrlText>
              <OmniActions>
                <Icon size={14} color="#5f6368" sw={1.6}><circle cx="8" cy="8" r="6.800" /><path d="M8 4.500v7M4.500 8h7" /></Icon>
                <Icon size={15} color="#5f6368" sw={1.5}><path d="M8 1.500l2 4.500 4.800.4-3.700 3.200 1.200 4.800L8 11.800l-4.300 2.600 1.200-4.800L1.200 6.400 6 6z" /></Icon>
              </OmniActions>
            </Omnibox>
            <Profile>M</Profile>
            <svg width="4" height="14" viewBox="0 0 4 14" fill="#3c3f43"><circle cx="2" cy="2" r="1.600" /><circle cx="2" cy="7" r="1.600" /><circle cx="2" cy="12" r="1.600" /></svg>
          </NavBar>
          <Bookmarks>
            <Bookmark $gap={17}><AppsDots />Apps</Bookmark>
            <Bookmark $gap={18}><Folder />ML</Bookmark>
            <Bookmark $gap={0}><Folder />Psy</Bookmark>
          </Bookmarks>
          <Suite>
            <svg width="15" height="15" viewBox="0 0 15 15" fill="#fff">{Array.from({ length: 9 }, (_, i) => <circle key={i} cx={1.6 + (i % 3) * 6} cy={1.6 + Math.floor(i / 3) * 6} r="1.500" />)}</svg>
            <Brand><HeaderLogo /></Brand>
            <Product>Outlook</Product>
            <SearchBox><Glyph name="search" />Search</SearchBox>
            <SuiteIcons>
              <SuiteCell><Icon><path d="M4.500.8C1.500.8 0 3.500 1 6.200.5 10.500 3.800 15 8.800 14.800c3.200 1.200 7-1 6-5.300C15.500 4.500 12 1 7.600 1.300 6.500.9 5.500.8 4.500.8z" /><path d="M10.800 5.700C10.200 3.800 5.500 3.600 5.500 6c0 2.600 5.300 1.500 5.300 4 0 2.500-5 2.300-5.600.2" strokeWidth="1.900" /></Icon></SuiteCell>
              <SuiteCell><Icon><path d="M3.500 0v3M10.500 0v3M.5 1.500h12v5M.5 4.500h12M.5 1.500v11H6M7.500 12.200l1.500-1.500 1.800 1.800 3.700-5 1.300 1.200-4.900 6.500z" /></Icon></SuiteCell>
              <SuiteCell><Icon><circle cx="8" cy="8" r="2.600" /><path d="M6.700.6h2.600l.5 2 1.500.7 1.800-1.100 1.800 1.800-1.100 1.800.6 1.500 2 .5v2.400l-2 .5-.6 1.500 1.100 1.800-1.800 1.800-1.800-1.100-1.500.7-.5 2H6.700l-.5-2-1.500-.7-1.800 1.100L1.100 14l1.100-1.800-.6-1.500-1.200-.5V7.800l1.200-.5.6-1.500L1.100 4l1.800-1.800 1.800 1.100 1.500-.7z" /></Icon></SuiteCell>
              <SuiteCell><Icon><path d="M4 4.500C4-.8 12.500-.8 12.200 4.500 12 7.500 8.300 8 8.300 12M8.300 14v1.500" /></Icon></SuiteCell>
              <SuiteCell><Icon><path d="M.5 7.500L15.500 4.500v9L.5 9.800zM4 10.800c0 3.800 5 4.300 5.500 1.300" /></Icon><Badge>1</Badge></SuiteCell>
              <SuiteCell><Icon><path d="M2.500 13.500h11M3.500 13.500V6.500c0-7 9-7 9 0v7M6 13.800c.5 2.200 3.500 2.200 4 0" /></Icon></SuiteCell>
              <Me>CF<Away /></Me>
            </SuiteIcons>
          </Suite>
          <Commands>
            <Glyph name="menu" />
            <NewMessage>New message</NewMessage>
            {commands.map((c) => (
              <Command key={c.icon} $w={c.w} $off={c.off}>
                <Glyph name={c.icon} />
                {c.label}
                {c.more && <Glyph name="chevron" size={13} sw={1.2} />}
              </Command>
            ))}
          </Commands>
          <Panes>
            <Sidebar>
              <Scroller>
                <NavList>
                  {navGroups.map((g) => (
                    <React.Fragment key={g.head}>
                      <NavHead><Glyph name="chevron" />{g.head}</NavHead>
                      {g.items.map((n) => (
                        <NavRow key={n.label} $tone={n.tone} $link={n.link}>
                          <NavIcon>{n.icon && <Glyph name={n.icon} size={15} />}</NavIcon>
                          {n.label}
                          {n.count && <Count $bold={n.bold}>{n.count}</Count>}
                        </NavRow>
                      ))}
                    </React.Fragment>
                  ))}
                </NavList>
                <Bar $w={18} $top={7}><Arrow /><Thumb $h={739} $gap={13} /><Arrow $down /></Bar>
              </Scroller>
              <Modules>
                <Glyph name="mail" color={MAROON} /><Glyph name="calendar" /><Glyph name="people" /><Glyph name="todo" />
              </Modules>
            </Sidebar>
            <ListPane>
              <ListHead>
                <Glyph name="check" size={18} color="#605e5c" />
                <ListTitle>Inbox</ListTitle>
                <svg width="14" height="14" viewBox="0 0 14 14" fill="#3f0e10"><path d="M7 0l1.700 5H14L9.700 8.200 11.400 14 7 10.500 2.600 14l1.700-5.800L0 5h5.300z" /></svg>
                <Filter>Filter<Glyph name="chevron" size={10} sw={1.5} /></Filter>
              </ListHead>
              <Scroller>
                <Rows>
                  {today.map((m, i) => <MessageRow key={i} m={m} />)}
                  <Group>Yesterday</Group>
                  {yesterday.map((m, i) => <MessageRow key={i} m={m} />)}
                </Rows>
                <Bar $w={18} $top={7}><Arrow /><Thumb $h={78} $gap={13} /><Arrow $down /></Bar>
              </Scroller>
            </ListPane>
            <Reading>
              <Title>Interested in graduate studies?</Title>
              <ReadScroll>
                <Card>
                  <CardHead>
                    <BigAvatar>GE</BigAvatar>
                    <Meta>
                      <From>Graduate College Events</From>
                      Thu 11/7/2019 8:41 AM
                      <To>Cruse, Mason F <Glyph name="down2" size={10} color="#7a7876" sw={1.5} /></To>
                    </Meta>
                    <Actions>
                      <Glyph name="like" /><Glyph name="reply" /><Glyph name="replyAll" /><Glyph name="forward" /><Glyph name="dots" />
                    </Actions>
                  </CardHead>
                  <LogoRow><CollegeLogo /></LogoRow>
                  <Letter>
                    <p>Dear Mason,</p>
                    <p>Do you aspire to <Gold>reach higher</Gold> and go to <Gold>graduate school</Gold>? Are you wondering how different this is from undergraduate studies?</p>
                    <p>Learn about the <Gold>benefits</Gold> of attending graduate school at our November <a>Graduate Information Sessions</a>!</p>
                    <p>Hosted by <a>The Graduate College</a> at Texas State University, these sessions will provide information about graduate studies, funding opportunities, the application process, standardized test prep resources, career opportunities, and more!</p>
                    <p>There will be two opportunities this November to get all your questions about graduate school answered. Please feel free attend whichever date is most convenient for you.</p>
                    <p>Register for these <b>free</b> sessions today!</p>
                    <H>Graduate Information Sessions</H>
                    <Venue><a>Thursday November 14, 2019</a><br />Noon – 3 p.m.<br />LBJ Student Center, 3-9.1<br />San Marcos Campus</Venue>
                    <Schedule>
                      <Cell $kind="head">Time</Cell><Cell $kind="head">Session</Cell>
                      {schedule.map(([t, s], i) => (
                        <React.Fragment key={t}>
                          <Cell $kind={i % 2 ? "even" : "odd"} $tall={i === 4} $up={i > 3}>{t}</Cell>
                          <Cell $kind={i % 2 ? "even" : "odd"} $tall={i === 4} $up={i > 3}>{s}</Cell>
                        </React.Fragment>
                      ))}
                    </Schedule>
                    <p><a>Register</a> for these sessions!</p>
                    <Venue $gap={18}><a>Wednesday November 20, 2019</a><br />4:30 – 7:30 p.m.</Venue>
                  </Letter>
                </Card>
                <Bar $w={20} $top={7}><Arrow /><Thumb $h={447} $gap={13} /><Arrow $down /></Bar>
              </ReadScroll>
            </Reading>
          </Panes>
        </Browser>
      </Work>
      <Tooltip>Show Applications</Tooltip>
      <EdgeStrip />
    </Desktop>
  );
}
